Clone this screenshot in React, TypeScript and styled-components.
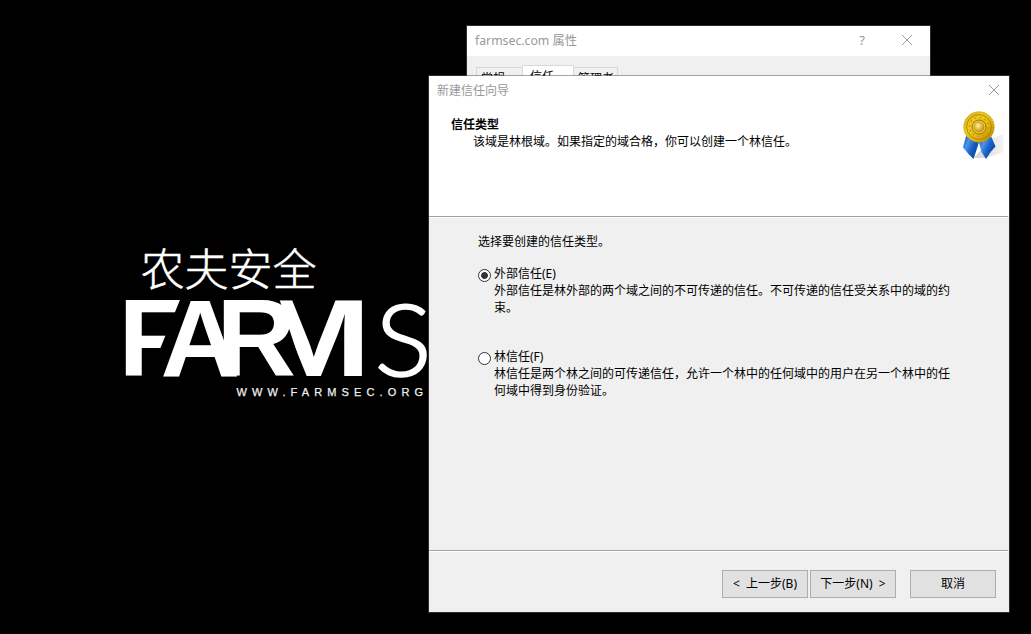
import React from "react";
import styled, { createGlobalStyle } from "styled-components";

const Global = createGlobalStyle`
  html, body { margin: 0; padding: 0; background: #000; }
  body {
    font-family: "Noto Sans", "Noto Sans CJK SC", sans-serif;
    font-size: 12px;
    line-height: 17px;
    color: #000;
    overflow: hidden;
  }
`;

const Desktop = styled.main`
  position: relative;
  box-sizing: border-box;
  width: 1031px;
  height: 634px;
  background: #000;
  border-bottom: 1px solid #0c040a;
  overflow: hidden;
`;

const Wallpaper = styled.svg`
  position: absolute;
  left: 110px;
  top: 235px;
`;

const Window = styled.section<{ $x: number; $y: number; $w: number; $h: number }>`
  position: absolute;
  left: ${(p) => p.$x}px;
  top: ${(p) => p.$y}px;
  width: ${(p) => p.$w}px;
  height: ${(p) => p.$h}px;
  display: flex;
  flex-direction: column;
  background: #f0f0f0;
  background-clip: padding-box;
  border: 1px solid rgba(86, 86, 86, 0.52);
  white-space: nowrap;
`;

const TitleBar = styled.header<{ $h: number }>`
  box-sizing: border-box;
  display: flex;
  align-items: center;
  height: ${(p) => p.$h}px;
  padding: 0 9px 1px 8px;
  background: #fff;
  color: #999;
`;

const Title = styled.span<{ $size?: number }>`
  flex: 1;
  font-size: ${(p) => p.$size ?? 12}px;
`;

const HelpMark = styled.span`
  font-size: 13px;
  margin-right: 36px;
  padding-bottom: 1px;
`;

const CloseIcon = styled.svg<{ $inset?: number }>`
  display: block;
  margin: 0 ${(p) => p.$inset ?? 0}px 1px 0;
`;

const Tabs = styled.nav`
  display: flex;
  align-items: flex-start;
  padding: 9px 0 0 9px;
`;

const Tab = styled.span<{ $w: number; $active?: boolean; $last?: boolean }>`
  box-sizing: border-box;
  width: ${(p) => p.$w}px;
  height: 24px;
  margin-top: ${(p) => (p.$active ? 0 : 2)}px;
  padding: ${(p) => (p.$active ? "2px 0 0 7px" : "2px 0 0 4px")};
  border: 1px solid #d9d9d9;
  border-right-width: ${(p) => (p.$active || p.$last ? 1 : 0)}px;
  border-left-width: ${(p) => (p.$last ? 0 : 1)}px;
  background: ${(p) => (p.$active ? "#fff" : "#f0f0f0")};
`;

const Banner = styled.div`
  display: flex;
  justify-content: space-between;
  height: 111px;
  padding: 0 5px 0 22px;
  background: #fff;
`;

const BannerText = styled.div`
  padding-top: 11px;
`;

const Heading = styled.h1`
  margin: 0;
  font-size: 12px;
  line-height: 17px;
  font-weight: 700;
`;

const Subheading = styled.p`
  margin: 0 0 0 22px;
`;

const Rule = styled.div`
  height: 1px;
  margin-right: 1px;
  background: #a0a0a0;
  border-bottom: 1px solid #fff;
`;

const Body = styled.div`
  height: 332px;
  box-sizing: border-box;
  padding: 15px 0 0 49px;
`;

const Prompt = styled.p`
  margin: 0 0 15px;
`;

const Option = styled.label`
  display: flex;
  gap: 3px;
  height: 83px;
`;

const Radio = styled.span<{ $on?: boolean }>`
  box-sizing: border-box;
  width: 13px;
  height: 13px;
  margin-top: 4px;
  border: 1px solid #333;
  border-radius: 50%;
  background: ${(p) =>
    p.$on ? "radial-gradient(circle, #333 0 3px, #fff 3.8px)" : "#fff"};
`;

const Footer = styled.footer`
  display: flex;
  padding: 18px 0 0 293px;
`;

const Button = styled.button<{ $gap?: number }>`
  box-sizing: border-box;
  width: 86px;
  height: 28px;
  margin: 0 ${(p) => p.$gap ?? 0}px 0 0;
  padding: 0 0 1px;
  border: 1px solid #adadad;
  background: #e1e1e1;
  color: #000;
  font: inherit;
  word-spacing: 3px;
  white-space: pre;
`;

const Close = ({ inset }: { inset?: number }) => (
  <CloseIcon $inset={inset} width="12" height="12" viewBox="0 0 12 12" stroke="#999" strokeWidth="1">
    <path d="M1 1 11 11M11 1 1 11" />
  </CloseIcon>
);

const MedalSvg = styled.svg`
  display: block;
  margin-top: 1px;
`;

const Medal = () => (
  <MedalSvg width="43" height="56" viewBox="961 106 43 56">
    <defs>
      <linearGradient id="gold" x1="0" y1="0" x2="1" y2="1">
        <stop offset="0" stopColor="#d9a90c" />
        <stop offset=".35" stopColor="#f0cc22" />
        <stop offset=".65" stopColor="#dfb30c" />
        <stop offset="1" stopColor="#a87800" />
      </linearGradient>
      <radialGradient id="boss" cx=".4" cy=".35" r=".7">
        <stop offset="0" stopColor="#fff2a8" />
        <stop offset=".5" stopColor="#e9bd42" />
        <stop offset="1" stopColor="#c08a0c" />
      </radialGradient>
      <linearGradient id="ribbon" x1="0" y1="0" x2="1" y2=".6">
        <stop offset="0" stopColor="#0c4fae" />
        <stop offset=".35" stopColor="#4a94ea" />
        <stop offset=".65" stopColor="#1760c8" />
        <stop offset="1" stopColor="#0a4196" />
      </linearGradient>
      <linearGradient id="shade" x1="0" y1="0" x2="1" y2="0">
        <stop offset="0" stopColor="#d2d2d2" />
        <stop offset="1" stopColor="#f3f3f3" />
      </linearGradient>
    </defs>
    <path d="M974 158 990 139 1003.500 134V152L986 158Z" fill="url(#shade)" />
    <path d="M966 136 979 142 976.500 150 973.500 159 968.500 154 963 147.500Z" fill="url(#ribbon)" />
    <path d="M979 142 991 136 995.500 146.500 991 151.500 986 159 981.500 152Z" fill="url(#ribbon)" />
    <circle cx="979" cy="127" r="15.200" fill="url(#gold)" />
    <circle cx="979" cy="127" r="15.200" fill="none" stroke="#c0930c" strokeWidth="1" strokeDasharray="1.600 1.100" />
    <circle cx="979" cy="127" r="12.400" fill="none" stroke="#a87900" strokeWidth=".8" />
    <circle cx="979" cy="127" r="9.500" fill="none" stroke="#c89a10" strokeWidth="1.600" strokeDasharray="1.600 3.400" />
    <circle cx="979" cy="127" r="7" fill="#efcd3e" stroke="#946900" strokeWidth=".9" />
    <circle cx="979" cy="127" r="5" fill="url(#boss)" stroke="#ad7b05" strokeWidth=".5" />
  </MedalSvg>
);

const Logo = () => (
  <Wallpaper width="330" height="175" viewBox="110 235 330 175" fill="#fff">
    <defs>
      <clipPath id="cutF">
        <path d="M120 290H184L149 376V382H120Z" />
      </clipPath>
      <clipPath id="cutM">
        <path d="M278 295H365V380H306Z" />
      </clipPath>
    </defs>
    <text
      x="140.500"
      y="286"
      fontFamily="'Noto Sans CJK SC', sans-serif"
      fontWeight="300"
      fontSize="44"
      textLength="176"
      lengthAdjust="spacing"
      stroke="#fff"
      strokeWidth=".5"
    >
      农夫安全
    </text>
    <g fontFamily="'Liberation Sans', sans-serif" fontWeight="700" fontSize="110">
      <g clipPath="url(#cutF)">
        <text x="118.500" y="376">F</text>
      </g>
      <text x="160.500" y="376">A</text>
      <text x="216.500" y="376">R</text>
      <g clipPath="url(#cutM)">
        <text transform="translate(256.500 376) scale(1.25 1)">M</text>
      </g>
    </g>
    <text
      transform="translate(374.500 375.500) skewX(-1) scale(1.060 1)"
      fontFamily="Lato, sans-serif"
      fontWeight="300"
      fontSize="100"
      stroke="#fff"
      strokeWidth="2"
    >
      S
    </text>
    <text
      x="236.500"
      y="396"
      fontFamily="'Liberation Sans', sans-serif"
      fontSize="11"
      letterSpacing="5.120"
      fill="#f0f0f0"
      stroke="#f0f0f0"
      strokeWidth=".25"
    >
      WWW.FARMSEC.ORG
    </text>
  </Wallpaper>
);

export default function App() {
  return (
    <Desktop>
      <Global />
      <Logo />
      <Window $x={466} $y={25} $w={463} $h={200}>
        <TitleBar $h={30}>
          <Title $size={12.25}>farmsec.com 属性</Title>
          <HelpMark>?</HelpMark>
          <Close inset={8} />
        </TitleBar>
        <Tabs>
          <Tab $w={46}>常规</Tab>
          <Tab $w={52} $active>信任</Tab>
          <Tab $w={44} $last>管理者</Tab>
        </Tabs>
      </Window>
      <Window $x={428} $y={75} $w={580} $h={536}>
        <TitleBar $h={29}>
          <Title>新建信任向导</Title>
          <Close />
        </TitleBar>
        <Banner>
          <BannerText>
            <Heading>信任类型</Heading>
            <Subheading>该域是林根域。如果指定的域合格，你可以创建一个林信任。</Subheading>
          </BannerText>
          <Medal />
        </Banner>
        <Rule />
        <Body>
          <Prompt>选择要创建的信任类型。</Prompt>
          <Option>
            <Radio $on />
            <span>
              外部信任(E)<br />
              外部信任是林外部的两个域之间的不可传递的信任。不可传递的信任受关系中的域的约<br />
              束。
            </span>
          </Option>
          <Option>
            <Radio />
            <span>
              林信任(F)<br />
              林信任是两个林之间的可传递信任，允许一个林中的任何域中的用户在另一个林中的任<br />
              何域中得到身份验证。
            </span>
          </Option>
        </Body>
        <Rule />
        <Footer>
          <Button $gap={2}>{"< 上一步(B)"}</Button>
          <Button $gap={14}>{"下一步(N) >"}</Button>
          <Button>取消</Button>
        </Footer>
      </Window>
    </Desktop>
  );
}
